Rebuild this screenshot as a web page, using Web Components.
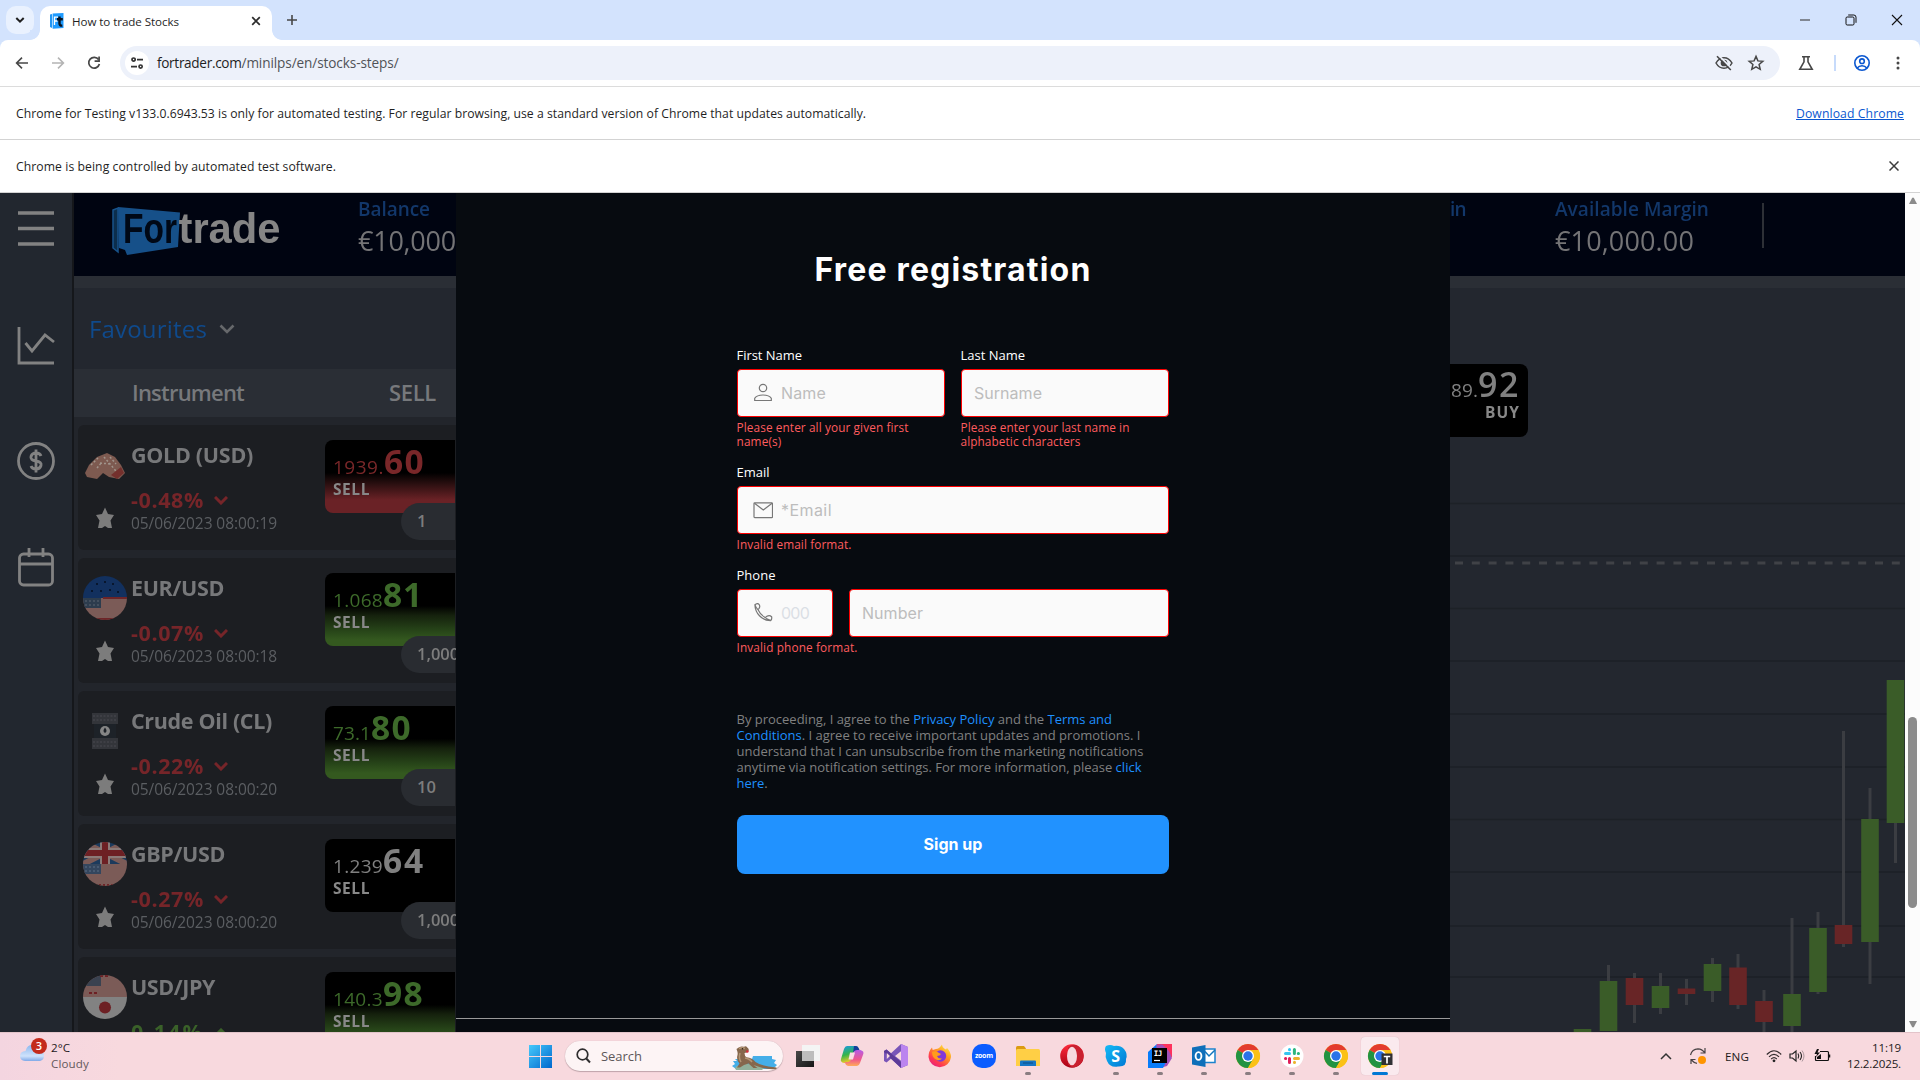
<!DOCTYPE html>
<html lang="en">
<head>
<meta charset="utf-8">
<title>How to trade Stocks</title>
<style>
html,body{margin:0;padding:0;width:1920px;height:1080px;overflow:hidden;background:#fff;font-family:"Open Sans","Noto Sans",sans-serif}
</style>
</head>
<body>
<desktop-screen></desktop-screen>
<script>
const define=(name,html,after)=>customElements.define(name,class extends HTMLElement{
  connectedCallback(){
    if(this.shadowRoot)return;
    const root=this.attachShadow({mode:'open'});
    const t=document.createElement('template');
    t.innerHTML=typeof html==='function'?html(this):html;
    root.appendChild(document.importNode(t.content,true));
    if(after)after(this,root);
  }
});

/* Single line of text spaced to an exact advance width */
define('fit-text','<style>:host{display:inline-block;white-space:pre}</style><slot></slot>',(el)=>{
  const w=parseFloat(el.getAttribute('w'));
  const n=[...el.textContent].length;
  const natural=el.getBoundingClientRect().width;
  if(w&&n&&natural)el.style.letterSpacing=((w-natural)/n).toFixed(3)+'px';
});

/* ---------- browser chrome ---------- */
define('tab-strip',`<style>
:host{display:flex;height:40px;background:#d3e3fd;align-items:flex-end;box-sizing:border-box;padding-left:6px}
svg{display:block}
.menu{width:28px;height:28px;border-radius:10px;background:#e9f1fe;display:grid;place-items:center;margin-bottom:6px}
.tab{margin-left:6px;width:232px;height:34px;background:#fff;border-radius:10px 10px 0 0;display:flex;align-items:center;box-sizing:border-box;padding:0 11px 4px 10px}
.title{font-size:11.6px;margin-left:8px;color:#1f1f1f;flex:1}
.curve{width:10px;height:10px;background:radial-gradient(circle at 100% 0,#d3e3fd 9.5px,#fff 10.2px)}
.l{margin-left:-4px;background:radial-gradient(circle at 0 0,#d3e3fd 9.5px,#fff 10.2px)}
.l+.tab{margin-left:0}
.plus{margin:0 0 14px 4px}
.win{display:flex;gap:34px;align-items:center;margin:0 17px 14px auto}
</style>
<div class="menu"><svg width="12" height="12" viewBox="0 0 12 12"><path d="M2.3 4 6 7.7 9.7 4" fill="none" stroke="#1f1f1f" stroke-width="2"/></svg></div>
<div class="curve l"></div>
<div class="tab">
<svg width="14" height="16" viewBox="0 0 14 16"><path d="M0 1.5 2 1v14l-2-1z" fill="#2196f3"/><path d="M2.6.5 13.5 0v15l-10.9.8z" fill="#1e9bff"/><path d="M4.500 12V4.2h3.500M4.500 8h3" stroke="#fff" stroke-width="1.300" fill="none"/><path d="M9.5 3.4v7.2q0 2.4 2.8 1.9M7 6.2h5.8" stroke="#07111f" stroke-width="2.4" fill="none"/></svg>
<div class="title"><fit-text w="107">How to trade Stocks</fit-text></div>
<svg width="10" height="10" viewBox="0 0 10 10"><path d="M1.2 1.2 8.8 8.8M8.8 1.2 1.2 8.8" stroke="#2c2c2c" stroke-width="1.7"/></svg>
</div><div class="curve"></div>
<svg class="plus" width="12" height="12" viewBox="0 0 12 12"><path d="M6 1v10M1 6h10" stroke="#474747" stroke-width="1.6"/></svg>
<div class="win">
<svg width="12" height="12"><path d="M1 6h10" stroke="#6b7078" stroke-width="1.6"/></svg>
<svg width="12" height="12" viewBox="0 0 12 12"><rect x="1" y="3" width="8" height="8" rx="1.2" fill="none" stroke="#111"/><path d="M3.2 1h5.6Q11 1 11 3.2v5.6" fill="none" stroke="#111"/></svg>
<svg width="12" height="12" viewBox="0 0 12 12"><path d="M1 1l10 10M11 1 1 11" stroke="#111" stroke-width="1.1"/></svg>
</div>`);

define('tool-bar',`<style>
:host{display:block;height:47px;background:#d3e3fd}
.bar{height:47px;box-sizing:border-box;background:#fff;border-radius:8px 8px 0 0;border-bottom:1px solid #dcdcdc;display:flex;align-items:center;padding:0 0 0 14px}
svg{display:block;flex:none}
.nav{display:flex;gap:20px;width:106px;align-items:center}
.nav svg{width:16px;height:16px}
.omni{width:1660px;height:34px;border-radius:17px;background:#edf1fa;display:flex;align-items:center;box-sizing:border-box;padding:0 15px 0 5px}
.site{width:24px;height:24px;border-radius:50%;background:#fff;display:grid;place-items:center;margin-right:8px}
.url{font-size:13.6px;color:#1f1f1f;flex:1;white-space:nowrap;line-height:20px}
.url .p{color:#505357}
.omni .star{margin-left:14px}
.sep{width:2px;height:16px;background:#c7dbfb;margin:0 17px 0 20px}
</style>
<div class="bar">
<div class="nav">
<svg viewBox="0 0 16 16"><path d="M14 8H3M8 2.6 2.6 8 8 13.4" fill="none" stroke="#474747" stroke-width="1.6"/></svg>
<svg viewBox="0 0 16 16"><path d="M2 8h11M8 2.6 13.4 8 8 13.4" fill="none" stroke="#b4b4b4" stroke-width="1.6"/></svg>
<svg viewBox="0 0 16 16"><path d="M12.6 4.6A5.4 5.4 0 1 0 13.4 9" fill="none" stroke="#474747" stroke-width="1.7"/><path d="M13.1 1.6v4.6H8.6" fill="none" stroke="#474747" stroke-width="1.7"/></svg>
</div>
<div class="omni">
<div class="site"><svg width="14" height="14" viewBox="0 0 14 14"><g fill="none" stroke="#333" stroke-width="1.7"><circle cx="3.6" cy="3.6" r="1.6"/><path d="M7 3.6h6M1 10.6h6"/><circle cx="10.6" cy="10.6" r="1.6"/></g></svg></div>
<div class="url"><fit-text w="84.5">fortrader.com</fit-text><fit-text class="p" w="157">/minilps/en/stocks-steps/</fit-text></div>
<svg width="18" height="18" viewBox="0 0 18 18"><g fill="none" stroke="#474747" stroke-width="1.5"><path d="M1 9Q4 3.7 9 3.7T17 9q-3 5.3-8 5.3T1 9z"/><circle cx="9" cy="9" r="2.6" fill="#474747"/></g><path d="M3.6 1.4 17 14.8" stroke="#edf1fa" stroke-width="1.8"/><path d="M2 2.2 15.8 16" stroke="#474747" stroke-width="1.6"/></svg>
<svg class="star" width="18" height="18" viewBox="0 0 18 18"><path d="M9 2.4l1.9 4.5 4.9.4-3.7 3.2 1.1 4.8L9 12.8l-4.2 2.5 1.1-4.8-3.7-3.2 4.9-.4z" fill="none" stroke="#474747" stroke-width="1.5"/></svg>
</div>
<svg style="margin-left:18px" width="16" height="16" viewBox="0 0 16 16"><path d="M4 1.7h8M6 1.7v5.2L1.8 14.3h12.4L10 6.9V1.7" fill="none" stroke="#474747" stroke-width="1.6"/></svg>
<div class="sep"></div>
<svg width="18" height="18" viewBox="0 0 18 18"><g fill="none" stroke="#0b57d0" stroke-width="1.6"><circle cx="9" cy="9" r="7.2"/><circle cx="9" cy="7.2" r="2.3"/><path d="M4 14.2q2-2.4 5-2.4t5 2.4"/></g></svg>
<svg style="margin-left:24px" width="6" height="16" viewBox="0 0 6 16"><g fill="#474747"><circle cx="3" cy="3" r="1.5"/><circle cx="3" cy="8" r="1.5"/><circle cx="3" cy="13" r="1.5"/></g></svg>
</div>`);

define('info-bar',`<style>
:host{display:flex;align-items:center;justify-content:space-between;height:53px;box-sizing:border-box;border-bottom:1px solid #d3d3d3;background:#fff;padding:0 16px;font-size:12.2px;color:#1f1f1f}
::slotted(a){color:#0b57d0;text-decoration:underline}
</style><slot></slot>`);

/* ---------- trading platform behind the form ---------- */
const badge={
gold:`<svg width="44" height="44" viewBox="0 0 44 44"><path d="M2 30 6 22 14 14 24 10 32 14 38 22 42 30 36 36 26 34 20 30 14 36 4 34z" fill="#7d5a50"/><path d="M8 22 15 15M14 25l5-6M21 14l12 14M27 14l6 7M17 20l10 1" stroke="#a1958c" stroke-width="1.5" stroke-dasharray="2 2"/><path d="M28 32l6 4 7-6-3-6z" fill="#74302d"/></svg>`,
eur:`<svg width="44" height="44" viewBox="0 0 44 44"><clipPath id="c"><circle cx="22" cy="22" r="22"/></clipPath><g clip-path="url(#c)"><path d="M0 0h44v22H0z" fill="#12305e"/><path d="M0 22h44v22H0z" fill="#7b5b57"/><path d="M0 22h18v10H0z" fill="#2d3c4d"/><path d="M20 22h24M0 43h44" stroke="#6d2528" stroke-width="2"/><path d="M2 25h15M2 29h15" stroke="#5c6470" stroke-dasharray="2 2"/><g fill="#071122"><circle cx="14" cy="8" r="1.1"/><circle cx="22" cy="6" r="1.1"/><circle cx="30" cy="8" r="1.1"/><circle cx="9" cy="15" r="1.1"/><circle cx="18" cy="15" r="1.1"/><circle cx="27" cy="14" r="1.1"/><circle cx="35" cy="16" r="1.1"/></g></g></svg>`,
oil:`<svg width="44" height="44" viewBox="0 0 44 44"><path d="M9 4h26v11H9zM9 29h26v11H9z" fill="#33353a"/><path d="M11 15h22v14H11z" fill="#1d2228"/><path d="M10 7h24M10 11h24M10 33h24M10 37h24" stroke="#4a4b50" stroke-dasharray="2 1.5"/><circle cx="22" cy="22" r="5" fill="#858585"/><path d="M22 18.5q3 4 0 5.5-3-1.500 0-5.500z" fill="#1d2228"/></svg>`,
gbp:`<svg width="44" height="44" viewBox="0 0 44 44"><clipPath id="c"><circle cx="22" cy="22" r="22"/></clipPath><g clip-path="url(#c)"><path d="M0 0h44v22H0z" fill="#1c3a5c"/><path d="M0 0 44 22M44 0 0 22" stroke="#7b5b57" stroke-width="6"/><path d="M22 0v22M0 11h44" stroke="#8b7a78" stroke-width="10"/><path d="M22 0v22M0 11h44" stroke="#6d2024" stroke-width="6"/><path d="M0 22h44v22H0z" fill="#7b5b57"/><path d="M0 22h18v10H0z" fill="#34465e"/><path d="M2 25h15M2 29h15" stroke="#5c6f85" stroke-dasharray="2 2"/><path d="M0 43h44" stroke="#6d2528" stroke-width="2" stroke-dasharray="2 2"/></g></svg>`,
jpy:`<svg width="44" height="44" viewBox="0 0 44 44"><clipPath id="c"><circle cx="22" cy="22" r="22"/></clipPath><g clip-path="url(#c)"><path d="M0 0h44v22H0z" fill="#7b5b57"/><path d="M0 0h18v11H0z" fill="#3a4250"/><path d="M17 1h9M6 18h8" stroke="#6d2024" stroke-width="2" stroke-dasharray="3 2"/><path d="M0 22h44v22H0z" fill="#828282"/><circle cx="22" cy="32.500" r="6" fill="#6d2024"/></g></svg>`};

define('instrument-card',el=>{
const a=n=>el.getAttribute(n);
const tone={red:'#7a2729',green:'#3d6a2a',plain:'#808080'}[a('tone')];
const fill={red:'linear-gradient(#000 0 45%,#2a0f10 60%,#6a2226 82%)',green:'linear-gradient(#000 0 45%,#15210d 58%,#264318 78%,#34591f 92%)',plain:'#000'}[a('tone')];
const up=a('dir')==='up';
return `<style>
:host{display:grid;grid-template-columns:53px 194px 130px;height:125px;background:#1c1e22;border-radius:6px 0 0 6px;flex:none;overflow:hidden}
.ic{display:flex;flex-direction:column;align-items:center;padding-top:18px;gap:19px}
.info{display:flex;flex-direction:column;padding-top:15px}
.t{font-weight:700;font-size:21.500px;line-height:30px;color:#77787a}
.p{margin-top:17px;font-weight:700;font-size:21.500px;line-height:26px;color:${up?'#3a6129':'#762529'};display:flex;align-items:center;gap:10px}
.d{font-size:15.500px;line-height:20px;color:#5b5e62}
.box{margin-top:15px;height:73px;border-radius:8px 0 0 8px;background:${fill};box-sizing:border-box;padding:5px 0 0 8px;color:${tone}}
.n{font-size:19px;line-height:33px;height:33px;white-space:nowrap}
.n b{font-size:33.500px;font-weight:700}
.s{font-weight:700;font-size:15.500px;line-height:16px;margin-top:3px;color:#888;white-space:nowrap}
.v{position:relative;margin:-10px 0 0 76px;height:37px;border-radius:19px 0 0 19px;background:#292c31;color:#7d7d7d;font-weight:600;font-size:16.500px;line-height:35px;padding-left:16px}
</style>
<div class="ic">${badge[a('badge')]}<svg width="20" height="24" viewBox="0 0 20 24"><path d="M10 1.500 13 8l6 1-3.500 5.500L17 22h-4l-3-2-3 2H3l1.500-7.500L1 9l6-1z" fill="#7c7c7c"/></svg></div>
<div class="info"><div class="t"><fit-text w="${a('tw')}">${a('name')}</fit-text></div>
<div class="p"><fit-text w="73">${a('pct')}</fit-text><svg width="14" height="9" viewBox="0 0 14 9"><path d="${up?'M1 8 7 2l6 6':'M1 1l6 6 6-6'}" fill="none" stroke="currentColor" stroke-width="3"/></svg></div>
<div class="d"><fit-text w="146">${a('time')}</fit-text></div></div>
<div><div class="box"><div class="n"><fit-text w="${a('sw')}">${a('small')}</fit-text><b><fit-text w="${a('bw')}">${a('big')}</fit-text></b></div><div class="s"><fit-text w="37">SELL</fit-text></div></div>
<div class="v">${a('vol')}</div></div>`});

define('platform-left',`<style>
:host{display:flex;overflow:hidden;background:#22252b}
.wrap{display:flex;width:457px;height:839px;flex:none;filter:blur(.6px)}
.side{width:72px;flex:none;background:#22272f;border-right:2px solid #15171b;box-sizing:content-box;display:flex;flex-direction:column;align-items:center}
.side svg{display:block;flex:none;fill:none;stroke:#828282;stroke-width:2.800}
.col{width:383px;display:flex;flex-direction:column}
.head{height:83px;flex:none;background:#000411;display:flex;align-items:flex-start}
.bal{margin-left:77px;display:flex;flex-direction:column;padding-top:3px;white-space:nowrap}
.bal .k{font-size:19px;line-height:26px;color:#12376a;font-weight:600}
.bal .m{font-size:27px;line-height:38px;color:#747476}
.strip{height:12px;flex:none;background:#2a2e35}
.fav{height:81px;flex:none;background:#23272f;display:flex;align-items:center;padding-left:15px;gap:12px;color:#0f4a8c;font-size:24px}
.th{height:48px;flex:none;background:#2a2e35;display:flex;align-items:center;color:#77797c;font-weight:600;font-size:22px;line-height:46px}
.th fit-text{margin-top:-2px}
.list{display:flex;flex-direction:column;gap:8px;padding:8px 0 0 4px}
</style>
<div class="wrap">
<div class="side">
<svg style="margin-top:17px;stroke-width:3.600" width="38" height="38" viewBox="0 0 38 38"><path d="M1 3h36M1 18.500h36M1 34h36"/></svg>
<svg style="margin-top:78px" width="38" height="40" viewBox="0 0 38 40"><path d="M2 1v36h35M8.500 17l6.500 8 13-16 9 7"/></svg>
<svg style="margin-top:75px" width="38" height="40" viewBox="0 0 38 40"><circle cx="19" cy="20" r="17.500"/><path d="M24 15q-1-3-5-3t-5 3.500 5 4.500 5 4.500-5 3.500-5-3M19 8.500v23"/></svg>
<svg style="margin-top:66px" width="38" height="40" viewBox="0 0 38 40"><rect x="2.500" y="7" width="33" height="31" rx="4"/><path d="M2.500 17h33M12 1v9M26 1v9"/></svg>
</div>
<div class="col">
<div class="head">
<svg style="margin:9px 0 0 36px" width="171" height="56" viewBox="0 0 171 56"><path d="M3 8 8 6v44l-5-4z" fill="#0c2e4c" stroke="#17538b" stroke-width="1.500"/><path d="M8 5 70 10.500 68 45 17 53 15 48 9 46z" fill="#165089"/><g font-family="Liberation Sans,Arial,sans-serif" font-weight="700" font-size="42"><text x="13" y="41" textLength="54" lengthAdjust="spacingAndGlyphs" fill="#000816">For</text><text x="68.500" y="41" textLength="102" lengthAdjust="spacingAndGlyphs" fill="#858585">trade</text></g></svg>
<div class="bal"><div class="k"><fit-text w="72">Balance</fit-text></div><div class="m"><fit-text w="98">€10,000</fit-text></div></div>
</div>
<div class="strip"></div>
<div class="fav"><fit-text w="118">Favourites</fit-text><svg width="16" height="10" viewBox="0 0 16 10"><path d="M1.500 1.500 8 8l6.500-6.500" fill="none" stroke="#66686b" stroke-width="2.600"/></svg></div>
<div class="th"><fit-text style="margin-left:58px" w="112">Instrument</fit-text><fit-text style="margin-left:145px" w="47">SELL</fit-text></div>
<div class="list">
<instrument-card badge="gold" name="GOLD (USD)" tw="122" pct="-0.48%" time="05/06/2023 08:00:19" tone="red" small="1939." sw="51" big="60" bw="41" vol="1"></instrument-card>
<instrument-card badge="eur" name="EUR/USD" tw="93" pct="-0.07%" time="05/06/2023 08:00:18" tone="green" small="1.068" sw="50" big="81" bw="40" vol="1,000"></instrument-card>
<instrument-card badge="oil" name="Crude Oil (CL)" tw="141" pct="-0.22%" time="05/06/2023 08:00:20" tone="green" small="73.1" sw="38" big="80" bw="41" vol="10"></instrument-card>
<instrument-card badge="gbp" name="GBP/USD" tw="94" pct="-0.27%" time="05/06/2023 08:00:20" tone="plain" small="1.239" sw="50" big="64" bw="42" vol="1,000"></instrument-card>
<instrument-card badge="jpy" name="USD/JPY" tw="84" pct="0.14%" dir="up" time="05/06/2023 08:00:20" tone="green" small="140.3" sw="50" big="98" bw="41" vol="1,000"></instrument-card>
</div></div></div>`);

/* Candles: centre x, body top, body bottom, wick top, wick bottom, direction */
const candles=[[132.5,836,845,836,845,1],[158.5,788,838,772,788,1],[184.5,785,812,780,830,0],[210.5,793,815,780,821,1],[236.5,795.5,801,786,812,0],[262.5,771,798,765,809,1],[288,774.5,812,761,816,0],[314,808,829,797,845,0],[342,801,833,725,839,1],[368,735,799,719,801,1],[393.5,732,751,538,754,0],[420,626,749,595,791,1],[445.5,487,630,630,670,1]];
define('platform-right',()=>`<style>
:host{display:block;overflow:hidden;background:#23272f}
.wrap{width:455px;height:839px;filter:blur(.6px);display:flex;flex-direction:column}
.head{height:83px;flex:none;background:#000411;display:flex;color:#12376a;font-size:19px;font-weight:600;white-space:nowrap}
.head div{padding-top:3px;line-height:26px}
.m{font-size:27px;line-height:38px;color:#747476;font-weight:400}
.rule{width:2px;height:45px;background:#2d3036;margin:10px 0 0 53px}
.strip{height:12px;flex:none;background:#2a2e35}
.buy{margin-top:76px;width:78px;height:73px;flex:none;background:#000;border-radius:0 8px 8px 0;box-sizing:border-box;padding:4px 8px 0 0;color:#808080;display:flex;flex-direction:column;align-items:flex-end}
.n{font-size:19px;line-height:33px;height:33px;white-space:nowrap}
.n b{font-size:34px;font-weight:600}
.s{font-weight:700;font-size:15.500px;line-height:16px;margin-top:3px;color:#888}
.chart{margin-top:-244px;flex:none;display:block}
</style>
<div class="wrap"><div class="head"><div style="width:105px"><fit-text w="16">in</fit-text></div>
<div style="width:154px"><fit-text w="154">Available Margin</fit-text><br><fit-text class="m" w="139">€10,000.00</fit-text></div><span class="rule"></span></div>
<div class="strip"></div>
<div class="buy"><div class="n"><fit-text w="27">89.</fit-text><b><fit-text w="42">92</fit-text></b></div><div class="s"><fit-text w="35">BUY</fit-text></div></div>
<svg class="chart" width="455" height="839" viewBox="0 0 455 839">
<g stroke="#1d2127" stroke-width="1.300">${[310.500,363,415.500,468,521,574,626.500,679,733,784].map(y=>`<path d="M0 ${y}h455"/>`).join('')}</g>
<path d="M5 370h450" stroke="#404247" stroke-width="3" stroke-dasharray="8 8.800"/>
${candles.map(([x,t,b,wt,wb,g])=>`<path d="M${x} ${wt}V${wb}" stroke="#3b3d42" stroke-width="3"/><path d="M${x-8.8} ${t}h17.600V${b}h-17.600z" fill="${g?'#3a5c28':'#682526'}"/>`).join('')}
</svg></div>`);

/* ---------- registration form ---------- */
define('form-field',el=>`<style>
:host{display:flex;align-items:center;height:48px;box-sizing:border-box;border:1px solid #f00;border-radius:4px;background:#fafafa;padding-left:${el.hasAttribute('icon')?15:12}px;font:16px Inter,sans-serif;color:#bdbdbd}
svg{display:block;margin-right:8px;fill:none;stroke:#777;stroke-width:1.200}
</style>${{user:'<svg width="20" height="20" viewBox="0 0 20 20"><circle cx="10" cy="5" r="3.700"/><path d="M1.700 17.500v-2.200q2-3.300 8.300-3.300t8.300 3.300V17.500z"/></svg>',
mail:'<svg width="20" height="20" viewBox="0 0 20 20"><rect x="1" y="2.800" width="18.500" height="14.800" rx=".8"/><path d="M1.500 3.300 10.300 10l8.800-6.700"/></svg>',
phone:'<svg width="20" height="20" viewBox="0 0 20 20"><path d="M1.900 1.700C3.300.6 5.300.6 6 1.300c.9 1.200.9 2.800.1 4L4.900 6.600c1.500 3.500 4.200 6.200 7.500 8l1.500-1.300c1.600-1 3.400-.8 4.700.4.400 1.600.1 2.800-.9 3.900C8.500 17.500 2.200 10 1.900 1.700zM12.400 14.600c1.800 1.500 3.300 1.800 5.300 3M1.900 1.700c.4 2 1.500 3.300 3 4.900"/></svg>'}[el.getAttribute('icon')]||''}<slot></slot>`);

define('registration-panel',`<style>
:host{display:flex;flex-direction:column;background:#070b10;box-sizing:border-box;overflow:hidden}
.body{width:432px;margin:0 auto;display:flex;flex-direction:column}
h1{margin:57px 0 56px;font:700 32px/40px Inter,sans-serif;color:#fff;text-align:center;height:40px}
.row{display:flex;gap:16px}
.grow{flex:1}
label{display:block;font-size:13px;line-height:18px;color:#fff;margin:0 0 5px -.5px}
.err{font-size:11.800px;line-height:14px;color:#ff5c5f;margin:3px 0 15px -.5px;min-height:14px}
.err div{height:14px}
.consent{font-size:13px;line-height:16px;color:#808080;margin:42px 0 24px -.5px;height:80px;white-space:nowrap}
.consent a{color:#1e90ff}
button{all:unset;height:59px;border-radius:8px;background:#2192ff;color:#fff;font:700 16px/59px Inter,sans-serif;text-align:center}
hr{border:0;height:1px;background:#999;margin:144px 0 0;width:100%}
</style>
<div class="body">
<h1><fit-text w="277">Free registration</fit-text></h1>
<div class="row"><div class="grow"><label><fit-text w="65.500">First Name</fit-text></label><form-field icon="user"><fit-text w="45">Name</fit-text></form-field><div class="err"><div><fit-text w="172">Please enter all your given first</fit-text></div><div><fit-text w="45">name(s)</fit-text></div></div></div>
<div class="grow"><label><fit-text w="64.500">Last Name</fit-text></label><form-field><fit-text w="68">Surname</fit-text></form-field><div class="err"><div><fit-text w="169">Please enter your last name in</fit-text></div><div><fit-text w="120">alphabetic characters</fit-text></div></div></div></div>
<label><fit-text w="33">Email</fit-text></label><form-field icon="mail"><fit-text w="51">*Email</fit-text></form-field><div class="err"><div><fit-text w="115">Invalid email format.</fit-text></div></div>
<label><fit-text w="39">Phone</fit-text></label>
<div class="row"><form-field icon="phone" style="width:96px"><fit-text w="28" style="color:#dadfe5">000</fit-text></form-field><form-field class="grow"><fit-text w="61">Number</fit-text></form-field></div>
<div class="err"><div><fit-text w="121">Invalid phone format.</fit-text></div></div>
<div class="consent"><fit-text w="375.500">By proceeding, I agree to the <a>Privacy Policy</a> and the <a>Terms and</a></fit-text><br><fit-text w="404"><a>Conditions</a>. I agree to receive important updates and promotions. I</fit-text><br><fit-text w="407">understand that I can unsubscribe from the marketing notifications</fit-text><br><fit-text w="405">anytime via notification settings. For more information, please <a>click</a></fit-text><br><fit-text w="31"><a>here</a>.</fit-text></div>
<button><fit-text w="59">Sign up</fit-text></button>
</div><hr>`);

define('scroll-bar',`<style>:host{display:flex;flex-direction:column;align-items:center;justify-content:space-between;background:#fcfcfc;box-sizing:border-box;padding:4px 0}
.thumb{width:9px;height:191px;border-radius:5px;background:#8b8b8b;margin:513px 0 auto}svg{display:block}</style>
<svg width="10" height="7"><path d="M1 7 4.200.800h1.600L9 7z" fill="#8b8b8b"/></svg><div class="thumb"></div><svg width="10" height="7"><path d="M1 0 4.200 6.200h1.600L9 0z" fill="#8b8b8b"/></svg>`);

/* ---------- taskbar ---------- */
const chrome='<circle cx="12" cy="12" r="12" fill="#fbc116"/><path d="M12 12 1.600 6A12 12 0 0 1 22.400 6z" fill="#e33b2e"/><path d="M1.600 6A12 12 0 0 0 12 24l5.200-9L12 12z" fill="#229342"/><path d="M12 6h10.400A12 12 0 0 1 12 24l5.200-9z" fill="#fbc116"/><circle cx="12" cy="12" r="6" fill="#fff"/><circle cx="12" cy="12" r="4.700" fill="#2b73e8"/>';
const apps={
tasks:'<defs><linearGradient id="a" x2="1" y2="1"><stop stop-color="#484848"/><stop offset="1" stop-color="#161616"/></linearGradient></defs><path d="M0 7h18v16H0z" fill="url(#a)"/><path d="M6 1h18v16H6z" fill="#f4f4f4"/><path d="M6 7h12v10H6z" fill="#bdbdbd"/>',
copilot:'<defs><linearGradient id="a" x2=".3" y2="1"><stop stop-color="#1899e8"/><stop offset=".55" stop-color="#36b44a"/><stop offset="1" stop-color="#f8cd23"/></linearGradient><linearGradient id="b" x2="0" y1="0" y2="1"><stop stop-color="#b65be8"/><stop offset=".6" stop-color="#f0588c"/><stop offset="1" stop-color="#ffac58"/></linearGradient></defs><path d="M7 2h9q2 0 3 3l.7 2h-4q-2 0-3 3l-2 7q-1 2-4 2H4q-4-1-3-4L4 5q1-3 3-3z" fill="url(#a)"/><path d="M14 2h2q2 0 3 3l.7 2h-4q-2 0-2.700 2z" fill="#153e9c"/><path d="M17 22H8q-2 0-3-3l-.7-1h4q2 0 3-3l2-6q1-3 4-3h3q4 1 3 4L20 19q-1 3-3 3z" fill="url(#b)"/><path d="M10 8.500h5l-2 7H8.500z" fill="#fadce3"/>',
vs:'<path d="M17 0 24 3v18l-7 3L7 14.800 2.500 18.500 0 17V7l2.500-1.500L7 9.200z" fill="#7955b8"/><path d="M17 0 24 3v18l-7 3z" fill="#bb84ef"/><path d="M2.500 5.500 17 18v6L0 8V7z" fill="#5d3b98"/><path d="M17 7.200 11 12l6 4.800zM2.800 9v6L6 12z" fill="#f7d8de"/>',
firefox:'<defs><linearGradient id="a" x1=".9" x2=".2" y2="1"><stop stop-color="#fff34b"/><stop offset=".4" stop-color="#ff9a21"/><stop offset=".75" stop-color="#ff3a50"/><stop offset="1" stop-color="#e31b88"/></linearGradient></defs><path d="M14 .5q0 3 4 5l1-1.500q4 4 4 9A11.300 11.300 0 0 1 .5 13Q.5 7 4 3.500l.7 2.500L8 5q3 0 6-4.500z" fill="url(#a)"/><circle cx="12.500" cy="12" r="5.700" fill="#8138d8"/><path d="M4 8q4-2 7 1l2 1q-1 2-4 2 1 3 5 2.500-2 2.500-5 1.500-5-2-5-8z" fill="#ff9d1c"/>',
zoom:'<rect width="24" height="24" rx="10" fill="#0b5cff"/><text x="3" y="14.200" font-family="Open Sans" font-weight="700" font-size="7" textLength="18" fill="#fff">zoom</text>',
folder:'<path d="M0 3.500Q0 2 1.500 2H8l2 2.500V8H0z" fill="#dc9b11"/><path d="M0 6.500Q0 5 1.500 5h21Q24 5 24 6.500V22H0z" fill="#ffcf45"/><path d="M4 22v-4.500Q4 16.500 5 16.500h14q1 0 1 1V22z" fill="#1676c5"/><path d="M7 19h10" stroke="#0f4d83"/>',
opera:'<defs><linearGradient id="a" x2="0" y1="0" y2="1"><stop stop-color="#ff2a3b"/><stop offset="1" stop-color="#a70014"/></linearGradient></defs><circle cx="12" cy="12" r="11.800" fill="url(#a)"/><path d="M8 3.500Q12-1 18 2a12 12 0 0 1 0 20q-6 3-10-1.500z" fill="#c9202f"/><ellipse cx="12" cy="12" rx="5" ry="9.200" fill="#f7d8de"/>',
skype:'<defs><linearGradient id="a" x2="1" y2="1"><stop stop-color="#16baf5"/><stop offset="1" stop-color="#0078d4"/></linearGradient></defs><path d="M2 2q4-2 8 0 6-1 10 3 4 5 2 10 1 8-8 7.500Q6 24 3 17 .8 13 2 9 0 5 2 2z" fill="url(#a)"/><text x="7.300" y="18" font-family="Open Sans" font-weight="700" font-size="16" fill="#fff">S</text>',
idea:'<path d="M0 8 9 0h6v24H0z" fill="#087cfa"/><path d="M9 0h15v13L12 12z" fill="#fe315d"/><path d="M8 1 18 0l6 14-5 8-7 2z" fill="#a151b8"/><path d="M14 0h10v10z" fill="#fe315d"/><path d="M0 16h19l-4 8H0z" fill="#087cfa"/><path d="M4 4h15v15H4z" fill="#000"/><path d="M6 16.500h6" stroke="#fff" stroke-width="1.200"/><text x="5.800" y="12" font-family="DejaVu Sans Mono" font-weight="700" font-size="7.500" textLength="8.500" fill="#fff">IJ</text>',
outlook:'<path d="M12 5h11v13.500H12z" fill="#fff" stroke="#1b83cd" stroke-width="1.500"/><path d="M13 7.500l4 4.500 6-6" fill="none" stroke="#1476bd" stroke-width="1.500"/><path d="M0 3.500 13.500 1v22L0 20.500z" fill="#0f6fb9"/><ellipse cx="6.500" cy="12" rx="2.900" ry="3.900" fill="none" stroke="#fff" stroke-width="1.900"/>',
chrome,
slack:'<circle cx="12" cy="12" r="11.500" fill="#fff"/><g fill="none" stroke-width="3" stroke-linecap="round"><path d="M5.500 9.500h4M9.500 5.500v.2" stroke="#36c5f0"/><path d="M14.400 5.500v4M18.500 9.500h-.2" stroke="#2eb67d"/><path d="M18.500 14.400h-4M14.500 18.500v-.2" stroke="#ecb22e"/><path d="M9.500 18.500v-4M5.500 14.400h.2" stroke="#e01e5a"/></g>',
chromet:chrome+'<path d="M13.500 9.500h11V21h-11z" fill="#303134"/><path d="M15.800 12.500h6.400M19 12.500v7" stroke="#fff" stroke-width="1.700"/>'};
define('task-icon',el=>{const on=el.getAttribute('state');return `<style>
:host{display:flex;flex-direction:column;align-items:center;width:38px;height:38px;margin:0 3px;box-sizing:border-box;border-radius:4px;padding-top:7px;flex:none;${on==='active'?'background:#faeaee;box-shadow:0 0 1px #c9aeb5;':''}}
svg{display:block;overflow:visible}i{display:block;margin-top:4px;height:3px;border-radius:2px;width:${on==='active'?16:6}px;background:${on==='active'?'#0078d4':'#8a7d81'}}</style>
<svg width="24" height="24" viewBox="0 0 24 24">${apps[el.getAttribute('app')]}</svg>${on?'<i></i>':''}`});

define('task-bar',`<style>
:host{display:flex;height:48px;background:linear-gradient(90deg,#f4d5e0 0,#f8d9de 120px,#f8d9de 100%);box-shadow:inset 0 1px #e3c4ca;box-sizing:border-box;color:#1d1a1b;font-size:11.600px;line-height:16px}
svg{display:block;flex:none}
.weather{display:flex;width:509px;padding:8px 0 0 20px;gap:8px;box-sizing:content-box}
.weather svg{margin-top:-4px}
.weather fit-text,.clock fit-text{vertical-align:top}
.start{margin:13px 0 0}
.search{margin:9px 4px 0 13px;width:218px;height:30px;border-radius:16px;background:#fdf4f5;box-shadow:0 1px 1px #bfa4aa,0 0 1px #c9adb3;display:flex;align-items:center;box-sizing:border-box;padding:0 6px 0 11px;color:#5d5759;font-size:13px}
.apps{display:flex;padding-top:5px;margin-left:-1px}
.tray{margin-left:auto;display:flex;align-items:center;height:48px}
.clock{text-align:right;width:70px;margin-right:19px}
</style>
<div class="weather"><svg width="28" height="28" viewBox="0 0 28 28"><defs><linearGradient id="w" x2="0" y1="0" y2="1"><stop stop-color="#8ab6ee"/><stop offset=".7" stop-color="#cfe2fb"/><stop offset="1" stop-color="#7fa9e8"/></linearGradient></defs><path d="M5 25Q0 24.500 0 20t5.500-5Q7 8.500 13 8.500t7.500 6q3.500.5 3.500 5T20 25z" fill="url(#w)"/><circle cx="19" cy="10" r="8" fill="#c42b1c"/><text x="15.800" y="14" font-size="11" font-weight="600" fill="#fff" font-family="Open Sans">3</text></svg>
<div style="margin-left:-5px"><div><fit-text w="19">2°C</fit-text></div><div><fit-text w="38" style="color:#63585b">Cloudy</fit-text></div></div></div>
<svg class="start" width="23" height="23" viewBox="0 0 23 23"><defs><linearGradient id="s" x2="1" y2="1"><stop stop-color="#46c9fb"/><stop offset="1" stop-color="#0067cd"/></linearGradient></defs><path d="M0 0h11v11H0zM12 0h11v11H12zM0 12h11v11H0zM12 12h11v11H12z" fill="url(#s)"/></svg>
<div class="search"><svg width="15" height="16" viewBox="0 0 15 16"><circle cx="6.500" cy="6.500" r="5.300" fill="none" stroke="#2f2d2e" stroke-width="1.700"/><path d="M10.300 10.500 14 14.500" stroke="#2f2d2e" stroke-width="2"/></svg>
<fit-text style="margin-left:10px" w="41">Search</fit-text>
<svg style="margin-left:auto;margin-bottom:-3px" width="45" height="24" viewBox="0 0 45 24"><path d="M1 15h4l-2-2h17l1-3h19v3l4 1-2 3 3 2-4 4H4l-4-3 3-2z" fill="#45aee8"/><path d="M3 22q3-4 12-4t17 4l-2 2H4z" fill="#91b09a"/><path d="M5 4.500 4.500 3 6 2Q8-.2 12 .8q2-1.300 3 .4 2.500 1.500 1.500 4-1.500 1.800-4 1.800 0 3 2 4.300 6 .7 9 4.700 6 4 21 5.500v1.500q-10 1-20-3l-3-1 4 3h-4l-5-4.500-4.500 1.500L8 21.500H5l2.500-4Q4 14 5.500 9 6 7 5 4.500z" fill="#86674c"/><path d="M7 2.500q3-1.500 6 0M8 7q-1.500 5 1 9M13 12q5 1 7 4" stroke="#b39676" stroke-width="1.500" fill="none"/><circle cx="10.500" cy="2.800" r=".7" fill="#2d1d14"/><circle cx="15.300" cy="5.500" r="1.300" fill="#d62b38"/></svg></div>
<div class="apps"><task-icon app="tasks"></task-icon><task-icon app="copilot"></task-icon><task-icon app="vs"></task-icon><task-icon app="firefox"></task-icon><task-icon app="zoom"></task-icon><task-icon app="folder" state="open"></task-icon><task-icon app="opera"></task-icon><task-icon app="skype" state="open"></task-icon><task-icon app="idea" state="open"></task-icon><task-icon app="outlook" state="open"></task-icon><task-icon app="chrome" state="open"></task-icon><task-icon app="slack" state="open"></task-icon><task-icon app="chrome" state="open"></task-icon><task-icon app="chromet" state="active"></task-icon></div>
<div class="tray">
<svg width="12" height="8" viewBox="0 0 12 8"><path d="M1 7l5-5 5 5" fill="none" stroke="#333" stroke-width="1.500"/></svg>
<svg style="margin-left:17px" width="18" height="18" viewBox="0 0 18 18"><path d="M1.500 8Q3 2 9 1.800 13 2 15.500 5.500M16 1v5h-4.500M2 17v-4.500h4.500M2.500 13Q5 16 8 16.300" fill="none" stroke="#4a4345" stroke-width="1.200"/><circle cx="13" cy="13" r="4" fill="#ff9500"/></svg>
<fit-text style="margin-left:18px;padding-top:1px" w="24">ENG</fit-text>
<svg style="margin-left:17px" width="16" height="14" viewBox="0 0 16 14"><g fill="none" stroke="#332c2e" stroke-width="1.200"><path d="M.8 5.500Q8-2 15.200 5.500M3 7.800q5-5 10 0M5.200 10q2.800-2.700 5.600 0"/></g><circle cx="8" cy="11.800" r="1.400" fill="#222"/></svg>
<svg style="margin-left:7px" width="17" height="14" viewBox="0 0 17 14"><path d="M1 5v4h2.500L7 12V2L3.500 5z" fill="none" stroke="#222" stroke-width="1.200"/><path d="M9 4.500q1.500 2.500 0 5M11 3q3 4 0 8" fill="none" stroke="#222" stroke-width="1.100"/><path d="M13 1.500q4 5.500 0 11" fill="none" stroke="#aa979c"/></svg>
<svg style="margin-left:8px" width="17" height="14" viewBox="0 0 17 14"><path d="M6 2.500h7.500q1 0 1 1v7q0 1-1 1h-11q-1 0-1-1V7" fill="none" stroke="#111" stroke-width="1.200"/><path d="M15.500 5.500v3" stroke="#111" stroke-width="1.500"/><path d="M3 0 .500 5H3L2 8l4-4.500H3.500L5 0zM3 10V8l4-3v5z" fill="#111"/></svg>
<div class="clock"><div><fit-text w="29">11:19</fit-text></div><div><fit-text w="54">12.2.2025.</fit-text></div></div>
</div>`);

define('desktop-screen',`<style>
:host{display:flex;flex-direction:column;width:1920px;height:1080px}
main{display:grid;grid-template-columns:456px 994px 455px 15px;height:839px;flex:none}
</style>
<tab-strip></tab-strip><tool-bar></tool-bar>
<info-bar><fit-text w="850">Chrome for Testing v133.0.6943.53 is only for automated testing. For regular browsing, use a standard version of Chrome that updates automatically.</fit-text><a><fit-text w="108" style="text-decoration:underline">Download Chrome</fit-text></a></info-bar>
<info-bar><fit-text w="320">Chrome is being controlled by automated test software.</fit-text><svg style="margin-right:5px" width="10" height="10" viewBox="0 0 10 10"><path d="M.5.500l9 9M9.500.500l-9 9" stroke="#3c3c3c" stroke-width="1.500"/></svg></info-bar>
<main><platform-left></platform-left><registration-panel></registration-panel><platform-right></platform-right><scroll-bar></scroll-bar></main>
<task-bar></task-bar>`);
</script>
</body>
</html>
